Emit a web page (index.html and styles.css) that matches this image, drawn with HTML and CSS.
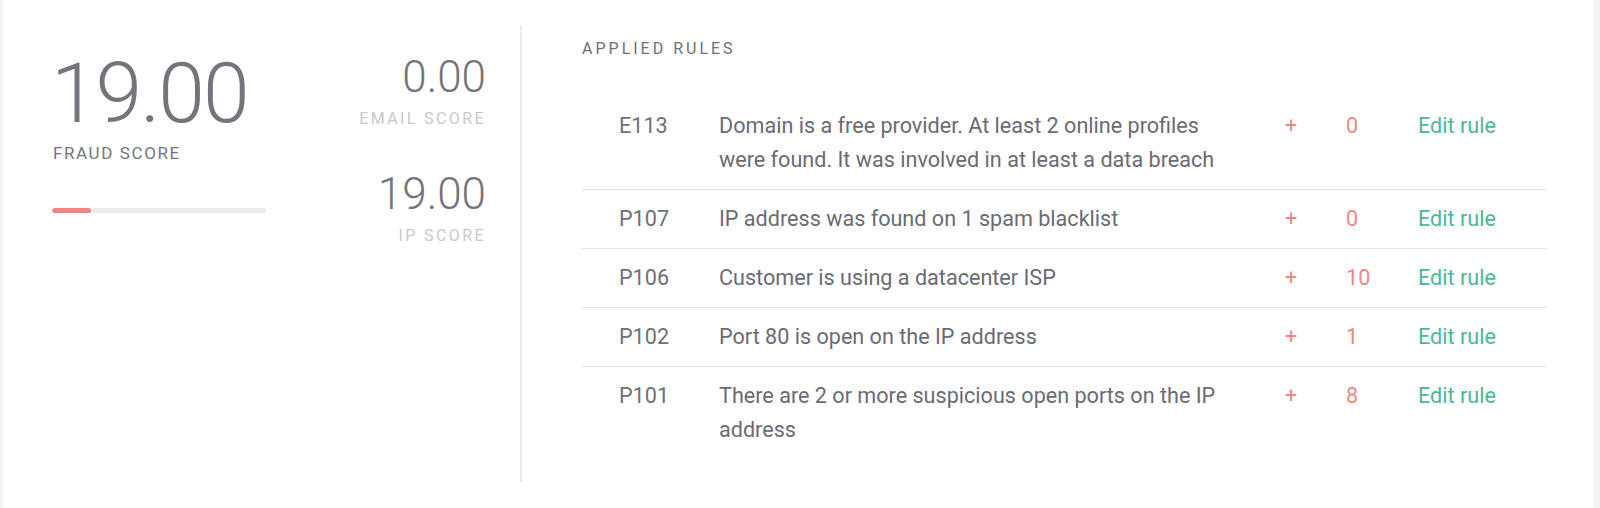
FILE: index.html
```html
<!DOCTYPE html>
<html>
<head>
<meta charset="utf-8">
<link rel="stylesheet" href="styles.css">
</head>
<body>
<div class="card">
  <section class="scores">
    <div class="main-score">
      <div class="big-value">19.00</div>
      <div class="big-label">FRAUD SCORE</div>
      <div class="bar"><div class="bar-fill" style="width: 18.4%"></div></div>
    </div>
    <div class="sub-scores">
      <div class="sub">
        <div class="sub-value">0.00</div>
        <div class="sub-label">EMAIL SCORE</div>
      </div>
      <div class="sub">
        <div class="sub-value">19.00</div>
        <div class="sub-label">IP SCORE</div>
      </div>
    </div>
  </section>
  <section class="rules">
    <h2 class="rules-title">APPLIED RULES</h2>
    <div class="rule-list">
      <div class="rule">
        <div class="code">E113</div>
        <div class="desc">Domain is a free provider. At least 2 online profiles were found. It was involved in at least a data breach</div>
        <div class="plus">+</div>
        <div class="pts">0</div>
        <a class="edit">Edit rule</a>
      </div>
      <div class="rule">
        <div class="code">P107</div>
        <div class="desc">IP address was found on 1 spam blacklist</div>
        <div class="plus">+</div>
        <div class="pts">0</div>
        <a class="edit">Edit rule</a>
      </div>
      <div class="rule">
        <div class="code">P106</div>
        <div class="desc">Customer is using a datacenter ISP</div>
        <div class="plus">+</div>
        <div class="pts">10</div>
        <a class="edit">Edit rule</a>
      </div>
      <div class="rule">
        <div class="code">P102</div>
        <div class="desc">Port 80 is open on the IP address</div>
        <div class="plus">+</div>
        <div class="pts">1</div>
        <a class="edit">Edit rule</a>
      </div>
      <div class="rule">
        <div class="code">P101</div>
        <div class="desc">There are 2 or more suspicious open ports on the IP address</div>
        <div class="plus">+</div>
        <div class="pts">8</div>
        <a class="edit">Edit rule</a>
      </div>
    </div>
  </section>
</div>
</body>
</html>
```

FILE: styles.css
```css
* { box-sizing: border-box; }
html, body { margin: 0; padding: 0; }
body {
  background: #f4f4f8;
  font-family: Roboto, "Liberation Sans", sans-serif;
  width: 1600px;
  height: 508px;
  overflow: hidden;
}
.card {
  margin-left: 3px;
  width: 1590px;
  height: 508px;
  background: #ffffff;
  display: flex;
  align-items: flex-start;
}
.scores {
  width: 517px;
  padding: 0 34px 0 49px;
  display: flex;
  justify-content: space-between;
}
.main-score { padding-top: 52px; }
.big-value {
  font-size: 84px;
  line-height: 84px;
  font-weight: 300;
  letter-spacing: -2px;
  color: #74747c;
  margin-left: -1px;
}
.big-label {
  margin-top: 7px;
  font-size: 17px;
  line-height: 20px;
  letter-spacing: 1.6px;
  color: #75757d;
  margin-left: 1px;
}
.bar {
  margin-top: 45px;
  width: 214px;
  height: 5px;
  border-radius: 3px;
  background: #ececec;
  overflow: hidden;
}
.bar-fill {
  height: 100%;
  background: #ea8a83;
  border-radius: 3px;
}
.sub-scores {
  padding-top: 55px;
  display: flex;
  flex-direction: column;
  align-items: flex-end;
  gap: 43px;
}
.sub { text-align: right; }
.sub-value {
  font-size: 44px;
  line-height: 44px;
  font-weight: 300;
  color: #74747c;
}
.sub-label {
  margin-top: 10px;
  font-size: 16px;
  line-height: 20px;
  letter-spacing: 2.4px;
  color: #c8c8cd;
}
.rules {
  flex: 1;
  margin-top: 25px;
  height: 458px;
  border-left: 2px solid #ececec;
  padding: 14px 46px 0 60px;
}
.rules-title {
  margin: 0;
  font-size: 16px;
  line-height: 20px;
  font-weight: 400;
  letter-spacing: 3px;
  color: #6f6f77;
}
.rule-list { margin-top: 38px; }
.rule {
  display: grid;
  grid-template-columns: 100px 566px 61px 72px 1fr;
  padding: 12px 0 12px 37px;
  font-size: 21.6px;
  line-height: 34px;
  border-bottom: 1px solid #e4e4e6;
}
.rule:last-child { border-bottom: none; }
.code { color: #707078; }
.desc { color: #6b6b73; padding-right: 46px; }
.plus, .pts { color: #ea8a83; }
.edit { color: #4db897; cursor: pointer; }
```
